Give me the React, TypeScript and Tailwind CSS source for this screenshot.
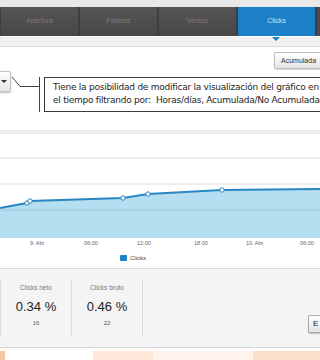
import React from "react";

const tabs = [
  { label: "Apertura", active: false },
  { label: "Fallidas", active: false },
  { label: "Ventas", active: false },
  { label: "Clicks", active: true },
];

const pts: [number, number][] = [
  [0, 74],
  [27, 69],
  [30, 67],
  [123, 64],
  [148, 60],
  [222, 56],
  [320, 55],
];

function Chart() {
  const line = pts.map((p) => p.join(",")).join(" ");
  const area = `0,104 ${line} 320,104`;
  return (
    <svg width="320" height="104" className="block">
      <line x1="0" y1="24" x2="320" y2="24" stroke="#dcdcdc" strokeWidth="1" />
      <line x1="0" y1="50" x2="320" y2="50" stroke="#dcdcdc" strokeWidth="1" />
      <polygon points={area} fill="#b5dff0" />
      <line x1="0" y1="76" x2="320" y2="76" stroke="#9cc8da" strokeWidth="1" />
      <polyline points={line} fill="none" stroke="#2a86c2" strokeWidth="2" />
      {[pts[1], pts[2], pts[3], pts[4], pts[5]].map((p, i) => (
        <circle key={i} cx={p[0]} cy={p[1]} r="2.2" fill="#ffffff" stroke="#2a86c2" strokeWidth="1" />
      ))}
    </svg>
  );
}

export default function App() {
  const font = { fontFamily: '"Liberation Sans", Arial, sans-serif' };
  return (
    <div className="w-[320px] h-[360px] overflow-hidden bg-white flex flex-col" style={font}>
      {/* top strip */}
      <div className="h-[7px] bg-[#e9e9e9]" />
      {/* tab bar */}
      <div className="h-[29px] bg-[#3e3e3e] flex pl-[1px] gap-[2px]">
        {tabs.map((t) => (
          <div
            key={t.label}
            className={
              t.active
                ? "w-[77px] flex items-center justify-center bg-[#1b80c8] text-[7px] text-[#cfe6f7]"
                : "w-[77px] flex items-center justify-center bg-gradient-to-b from-[#555555] to-[#474747] text-[7px] text-[#7a7a7a]"
            }
          >
            {t.label}
          </div>
        ))}
        <div className="flex-1 bg-[#4a4a4a]" />
      </div>
      {/* sub strip with pointer */}
      <div className="relative h-[11px] bg-[#f1f1f1] border-t border-white border-b border-b-[#dddddd]">
        <div className="absolute left-[272px] top-0 w-0 h-0 border-l-[4px] border-r-[4px] border-t-[4px] border-l-transparent border-r-transparent border-t-[#1b80c8]" />
      </div>
      {/* controls area */}
      <div className="relative h-[83px] bg-white">
        <div className="flex justify-end pt-[5px]">
          <div className="h-[17px] w-[46px] rounded-l-[2px] border border-[#bdbdbd] border-r-0 bg-gradient-to-b from-white to-[#e4e4e4] text-[7px] text-[#333] pl-[6px] leading-[15px] whitespace-nowrap overflow-hidden shadow-[0_1px_1px_rgba(0,0,0,0.15)]">
            Acumulada
          </div>
        </div>
        {/* dropdown */}
        <div className="absolute left-[-8px] top-[24px] w-[19px] h-[21px] rounded-[2px] border border-[#c4c4c4] bg-gradient-to-b from-white to-[#e6e6e6] shadow-[0_1px_2px_rgba(0,0,0,0.25)] flex items-center justify-end pr-[3px]">
          <div className="w-0 h-0 border-l-[3px] border-r-[3px] border-t-[3px] border-l-transparent border-r-transparent border-t-[#333]" />
        </div>
        {/* callout connector */}
        <svg className="absolute left-0 top-0" width="50" height="83">
          <polyline points="12,30 20,39.5 39,39.5" fill="none" stroke="#444" strokeWidth="1" />
          <line x1="39.5" y1="30" x2="39.5" y2="65" stroke="#444" strokeWidth="1" />
        </svg>
        {/* callout box */}
        <div
          className="absolute left-[44px] top-[30px] w-[300px] h-[35px] border border-[#3a3a3a] bg-white pl-[8px] pt-[3px] text-[9px] leading-[13px] text-[#1e1e1e] whitespace-nowrap tracking-[-0.25px]"
          style={{ fontFamily: '"DejaVu Sans", Verdana, sans-serif' }}
        >
          <div>Tiene la posibilidad de modificar la visualización del gráfico en</div>
          <div>el tiempo filtrando por:&nbsp; Horas/días, Acumulada/No Acumulada</div>
        </div>
      </div>
      {/* gray band */}
      <div className="h-[4px] bg-[#ececec]" />
      {/* chart */}
      <Chart />
      {/* axis labels */}
      <div className="relative h-[10px] text-[5.5px] text-[#666]">
        <span className="absolute left-[30px] top-[1px]">9. Abr</span>
        <span className="absolute left-[84px] top-[1px]">06:00</span>
        <span className="absolute left-[137px] top-[1px]">12:00</span>
        <span className="absolute left-[194px] top-[1px]">18:00</span>
        <span className="absolute left-[246px] top-[1px]">10. Abr</span>
        <span className="absolute left-[300px] top-[1px]">06:00</span>
      </div>
      {/* legend */}
      <div className="h-[20px] flex items-center pl-[120px] gap-[3px] text-[6px] text-[#444]">
        <div className="w-[7px] h-[6px] bg-[#1b80c8] rounded-[1px]" />
        <span>Clicks</span>
      </div>
      {/* stats */}
      <div className="h-[80px] bg-[#f4f4f4] border-t border-[#dadada] border-b border-b-[#d6d6d6] flex items-center relative">
        <div className="w-[1px] h-[58px] bg-[#dcdcdc]" />
        <div className="w-[71px] h-[58px] border-r border-[#dcdcdc] flex flex-col items-center">
          <span className="text-[6.5px] text-[#777] mt-[4px]">Clicks neto</span>
          <span className="text-[13px] text-[#222] mt-[7px] leading-[14px]">0.34 %</span>
          <span className="text-[6px] text-[#555] mt-[5px]">16</span>
        </div>
        <div className="w-[71px] h-[58px] border-r border-[#dcdcdc] flex flex-col items-center">
          <span className="text-[6.5px] text-[#777] mt-[4px]">Clicks bruto</span>
          <span className="text-[13px] text-[#222] mt-[7px] leading-[14px]">0.46 %</span>
          <span className="text-[6px] text-[#555] mt-[5px]">22</span>
        </div>
        <div className="flex-1" />
        <div className="self-end mb-[14px] h-[18px] w-[12px] border border-[#aaaaaa] border-r-0 rounded-l-[2px] bg-gradient-to-b from-white to-[#e2e2e2] text-[8px] text-[#222] pl-[4px] leading-[16px] overflow-hidden shadow-[0_1px_1px_rgba(0,0,0,0.2)]">
          E
        </div>
      </div>
      {/* bottom strip */}
      <div className="h-[3px] bg-white" />
      <div className="flex-1 flex bg-[#fde3d2]">
        <div className="w-[5px] bg-[#f9c6a2]" />
        <div className="w-[88px] bg-white" />
        <div className="w-[60px] bg-[#fde8da]" />
        <div className="w-[100px] bg-[#fff3ec]" />
        <div className="flex-1 bg-[#fde1cd]" />
      </div>
    </div>
  );
}
